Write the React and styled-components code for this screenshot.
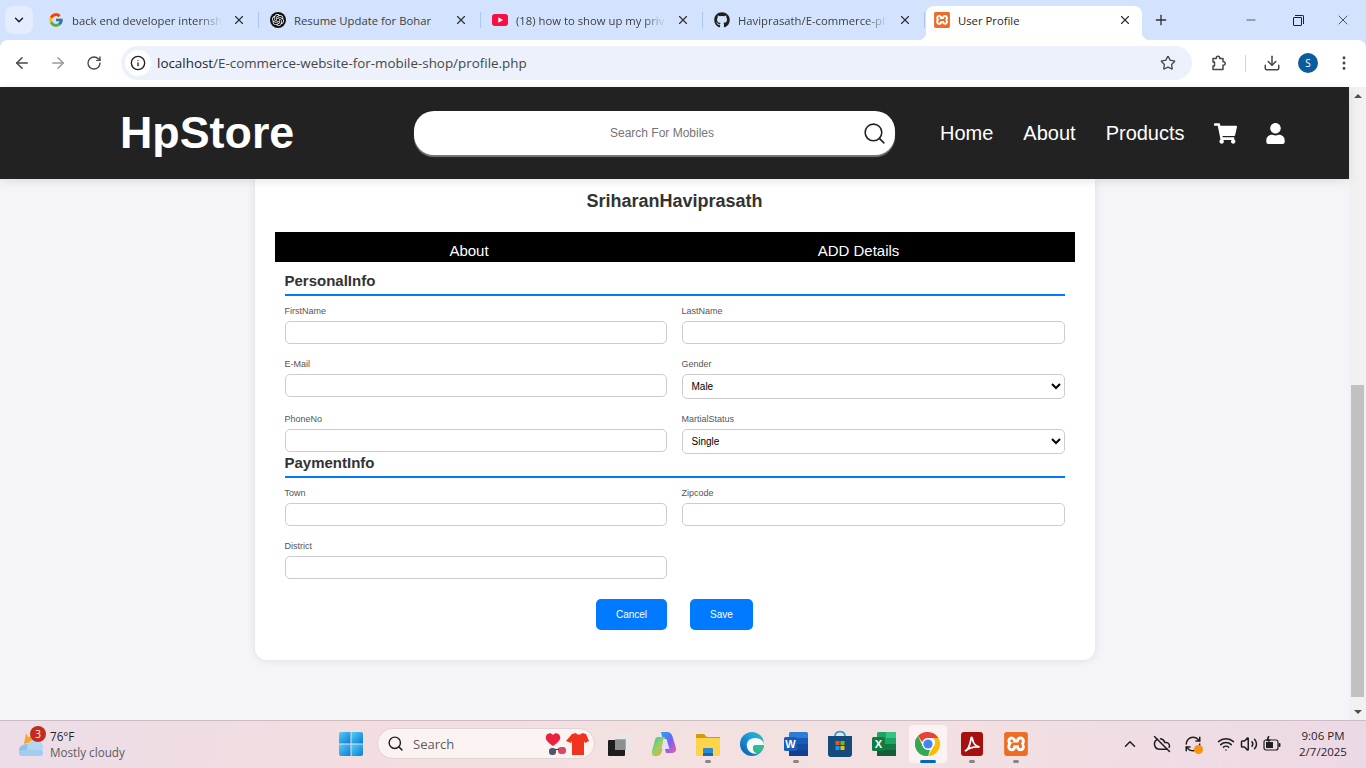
import React from 'react';
import styled, { createGlobalStyle } from 'styled-components';
import {
  ArrowLeft, ArrowRight, RotateCw, Star, Download, EllipsisVertical, Info, X, Plus, Minus,
  ChevronDown, ChevronUp, CloudOff, RefreshCw, Wifi, Volume2, Search,
} from 'lucide-react';
import { FaShoppingCart, FaUser, FaGithub } from 'react-icons/fa';
import { FcGoogle } from 'react-icons/fc';
import { SiOpenai, SiXampp } from 'react-icons/si';

const GlobalStyle = createGlobalStyle`
    html, body {
        margin: 0;
        padding: 0;
        height: 768px;
        overflow: hidden;
    }
    * {
        box-sizing: border-box;
    }
`

const Screen = styled.div`
    width: 1366px;
    height: 768px;
    display: flex;
    flex-direction: column;
    overflow: hidden;
    font-family: "Liberation Sans", Arial, sans-serif;
    background-color: #f4f4f9;
`

/* browser chrome */
const TabStrip = styled.div`
    height: 40px;
    flex: none;
    display: flex;
    align-items: flex-end;
    background-color: #d3e3fd;
    padding-left: 5px;
    font-family: "Open Sans", "Noto Sans", sans-serif;
    font-size: 11.3px;
    color: #3c4043;
`

const TabSearch = styled.div`
    width: 28px;
    height: 28px;
    margin: 0 5px 6px 0;
    border-radius: 8px;
    background-color: #e4edfd;
    display: flex;
    align-items: center;
    justify-content: center;
    color: #1f1f1f;
`

const Tab = styled.div`
    position: relative;
    width: ${props => props.$active ? "216px" : "222px"};
    height: 34px;
    flex: none;
    display: flex;
    align-items: center;
    padding: 0 0 6px ${props => props.$active ? "8px" : "10px"};
    border-radius: 8px 8px 0 0;
    background-color: ${props => props.$active ? "white" : "transparent"};
    color: ${props => props.$active ? "#1f1f1f" : "#3c4043"};

    &::before, &::after {
        content: ${props => props.$active ? '""' : "none"};
        position: absolute;
        bottom: 0;
        width: 8px;
        height: 8px;
    }
    &::before {
        left: -8px;
        background: radial-gradient(circle at 0 0, transparent 8px, white 8.5px);
    }
    &::after {
        right: -8px;
        background: radial-gradient(circle at 100% 0, transparent 8px, white 8.5px);
    }
`

const TabIconBox = styled.span`
    width: 16px;
    height: 16px;
    flex: none;
    margin-right: 8px;
    display: flex;
    align-items: center;
    justify-content: center;
`

const TabTitle = styled.span`
    width: 150px;
    flex: none;
    white-space: nowrap;
    -webkit-mask-image: ${props => props.$fade ? "linear-gradient(90deg, black 85%, transparent)" : "none"};
    mask-image: ${props => props.$fade ? "linear-gradient(90deg, black 85%, transparent)" : "none"};
`

const TabClose = styled.span`
    width: 16px;
    height: 16px;
    margin-left: 9px;
    display: flex;
    align-items: center;
    justify-content: center;
    color: #303134;
`

const TabSeparator = styled.span`
    position: absolute;
    right: 1px;
    top: 6px;
    width: 1.5px;
    height: 16px;
    background-color: #a8c7fa;
`

const NewTab = styled.div`
    width: 28px;
    height: 28px;
    margin: 0 0 6px 5px;
    display: flex;
    align-items: center;
    justify-content: center;
    color: #303134;
`

const WindowControls = styled.div`
    margin-left: auto;
    height: 40px;
    display: flex;
    color: #1f1f1f;
`

const WindowButton = styled.div`
    width: 46px;
    display: flex;
    align-items: center;
    justify-content: center;
`

const RestoreIcon = styled.span`
    position: relative;
    width: 9px;
    height: 9px;
    margin-top: 2px;
    border: 1px solid #1f1f1f;
    border-radius: 1px;

    &::after {
        content: "";
        position: absolute;
        top: -3px;
        right: -3px;
        width: 8px;
        height: 8px;
        border-top: 1px solid #1f1f1f;
        border-right: 1px solid #1f1f1f;
        border-top-right-radius: 2px;
    }
`

const ToolbarBackdrop = styled.div`
    flex: none;
    background-color: #d3e3fd;
`

const Toolbar = styled.div`
    height: 47px;
    display: flex;
    align-items: center;
    padding: 0 0 1px 4px;
    background-color: white;
    border-radius: 8px 8px 0 0;
    color: #474747;
`

const ToolButton = styled.div`
    width: 36px;
    height: 34px;
    flex: none;
    display: flex;
    align-items: center;
    justify-content: center;
    color: ${props => props.$dim ? "#9a9a9a" : "#474747"};
`

const Omnibox = styled.div`
    width: 1071px;
    height: 34px;
    margin: 0 9px 0 9px;
    flex: none;
    display: flex;
    align-items: center;
    padding: 0 10px 0 4px;
    border-radius: 17px;
    background-color: #ecf1fb;
    font-family: "Open Sans", "Noto Sans", sans-serif;
    font-size: 13.4px;
    color: #474747;
`

const SiteInfo = styled.div`
    width: 26px;
    height: 26px;
    border-radius: 50%;
    background-color: white;
    display: flex;
    align-items: center;
    justify-content: center;
    color: #1f1f1f;
    margin-right: 6px;
`

const UrlHost = styled.span`
    color: #1f1f1f;
`

const UrlText = styled.div`
    flex: 1;
`

const StarBox = styled.div`
    width: 28px;
    display: flex;
    justify-content: center;
    color: #474747;
`

const ToolDivider = styled.div`
    width: 1px;
    height: 17px;
    margin: 0 8px;
    background-color: #c7d7f0;
`

const Avatar = styled.div`
    width: 20px;
    height: 20px;
    border-radius: 50%;
    background-color: #0b5c9e;
    color: white;
    font-family: "Open Sans", sans-serif;
    font-size: 10px;
    display: flex;
    align-items: center;
    justify-content: center;
`

/* page */
const Viewport = styled.div`
    flex: 1;
    min-height: 0;
    display: flex;
`

const Page = styled.div`
    flex: 1;
    min-width: 0;
    display: flex;
    flex-direction: column;
    background-color: #f4f4f9;
`

const Header = styled.header`
    position: relative;
    z-index: 2;
    height: 92px;
    flex: none;
    display: flex;
    align-items: center;
    padding-left: 120px;
    background-color: #222;
    color: white;
    box-shadow: 0 2px 10px rgba(0, 0, 0, 0.1);
`

const Logo = styled.div`
    width: 174px;
    margin-top: -2px;
    font-size: 44.8px;
    font-weight: bold;
    white-space: nowrap;
`

const SearchBar = styled.div`
    width: 481px;
    height: 44px;
    margin: 0 45px 0 120px;
    display: flex;
    align-items: center;
    padding-right: 8px;
    border-radius: 20px;
    background-color: white;
    box-shadow: 0 2px 1px rgba(255, 255, 255, 0.4);
    color: #222;
`

const SearchInput = styled.input`
    flex: 1;
    min-width: 0;
    height: 100%;
    border: none;
    outline: none;
    background: transparent;
    padding: 0 0 0 48px;
    text-align: center;
    font-family: "Liberation Sans", Arial, sans-serif;
    font-size: 12px;

    &::placeholder {
        color: #757575;
    }
`

const Nav = styled.nav`
    display: flex;
    align-items: center;
    gap: 30px;
    font-size: 20px;
`

const CartIcon = styled(FaShoppingCart)`
    margin-left: -1px;
`

const UserIcon = styled(FaUser)`
    margin-left: -2px;
`

const Main = styled.main`
    flex: 1;
    min-height: 0;
    display: flex;
    justify-content: center;
    align-items: flex-start;
`

const Card = styled.section`
    width: 840px;
    padding: 12px 20px 30px;
    border-radius: 0 0 12px 12px;
    background-color: white;
    box-shadow: 0 0 10px rgba(0, 0, 0, 0.1);
`

const ProfileName = styled.h2`
    margin: 0 0 20px;
    font-size: 18px;
    line-height: 21px;
    font-weight: bold;
    text-align: center;
    color: #333;
`

const TabBar = styled.div`
    height: 30px;
    display: grid;
    grid-template-columns: 389px 390px;
    background-color: black;
    color: white;
    font-size: 15px;
    line-height: 18px;
    text-align: center;
    padding-top: 10px;
`

const Form = styled.form`
    padding: 10px 10px 0;
`

const SectionTitle = styled.h3`
    margin: 0 0 10px;
    padding-bottom: 4px;
    border-bottom: 2px solid #007bff;
    font-size: 15px;
    line-height: 18px;
    font-weight: bold;
    color: #333;
`

const FieldGrid = styled.div`
    display: grid;
    grid-template-columns: 382px 383px;
    column-gap: 15px;
`

const Field = styled.div`
    margin-bottom: ${props => props.$last ? "0" : "15px"};
`

const Label = styled.label`
    display: block;
    height: 15px;
    font-size: 9px;
    line-height: 11px;
    color: #555;
`

const TextInput = styled.input`
    display: block;
    width: 100%;
    height: 23px;
    border: 1px solid #ccc;
    border-radius: 5px;
    outline: none;
    background-color: white;
`

const SelectInput = styled.select`
    display: block;
    width: 100%;
    height: 25px;
    padding: 0 5px;
    border: 1px solid #ccc;
    border-radius: 5px;
    outline: none;
    background-color: white;
    font-family: "Liberation Sans", Arial, sans-serif;
    font-size: 10px;
    color: black;
`

const ButtonRow = styled.div`
    display: flex;
    justify-content: center;
    gap: 23px;
    margin-top: 5px;
`

const ActionButton = styled.button`
    width: ${props => props.$wide ? "71px" : "63px"};
    height: 31px;
    border: none;
    border-radius: 5px;
    background-color: #007bff;
    color: white;
    font-family: "Liberation Sans", Arial, sans-serif;
    font-size: 10px;
`

const ScrollTrack = styled.div`
    width: 17px;
    flex: none;
    display: flex;
    flex-direction: column;
    align-items: center;
    background-color: #f1f1f1;
`

const ScrollArrow = styled.div`
    height: 17px;
    flex: none;
    display: flex;
    align-items: center;
    justify-content: center;
    margin-top: ${props => props.$down ? "auto" : "0"};

    &::before {
        content: "";
        border-left: 4px solid transparent;
        border-right: 4px solid transparent;
        border-bottom: ${props => props.$down ? "0" : "4px solid #505050"};
        border-top: ${props => props.$down ? "4px solid #505050" : "0"};
    }
`

const ScrollThumb = styled.div`
    width: 13px;
    height: 312px;
    margin-top: 281px;
    flex: none;
    background-color: #c1c1c1;
`

/* taskbar */
const Taskbar = styled.footer`
    height: 48px;
    flex: none;
    display: flex;
    align-items: center;
    padding-bottom: 2px;
    border-top: 1px solid #cdbcc3;
    background: linear-gradient(90deg, #ecdde8 0%, #f3dde0 25%, #f3e1e1 50%, #f2dfe3 75%, #ecd9e6 100%);
    font-family: "Open Sans", "Noto Sans", sans-serif;
    color: #1f1f1f;
`

const Weather = styled.div`
    position: relative;
    width: 329px;
    height: 100%;
    flex: none;
    display: flex;
    align-items: center;
    padding-left: 18px;
`

const Badge = styled.span`
    position: absolute;
    left: 30px;
    top: 5px;
    width: 16px;
    height: 16px;
    border-radius: 50%;
    background-color: #c42b1c;
    color: white;
    font-size: 10px;
    line-height: 16px;
    text-align: center;
`

const WeatherText = styled.div`
    margin-left: 6px;
    font-size: 11.7px;
    line-height: 16px;
`

const Muted = styled.div`
    color: #5c5c5c;
`

const TaskButton = styled.div`
    position: relative;
    width: 44px;
    height: 38px;
    flex: none;
    display: flex;
    align-items: center;
    justify-content: center;

    &::before {
        content: ${props => props.$active ? '""' : "none"};
        position: absolute;
        left: 3px;
        right: 3px;
        top: 0;
        bottom: 0;
        border-radius: 4px;
        background-color: rgba(255, 255, 255, 0.6);
    }
    & > svg {
        position: relative;
    }
`

const RunDot = styled.span`
    position: absolute;
    left: 50%;
    bottom: 0;
    transform: translateX(-50%);
    width: ${props => props.$active ? "16px" : "6px"};
    height: 3px;
    border-radius: 2px;
    background-color: ${props => props.$active ? "#0067c0" : "#8a8387"};
`

const TaskSearch = styled.div`
    width: 218px;
    height: 31px;
    flex: none;
    margin: 0 3px 0 4px;
    display: flex;
    align-items: center;
    padding: 0 5px 0 9px;
    border-radius: 16px;
    border: 1px solid #e0d3d5;
    background-color: #fbf3f2;
    font-size: 13px;
    color: #5c5c5c;
`

const SearchWord = styled.span`
    margin-left: 9px;
    flex: 1;
`

const Tray = styled.div`
    margin-left: auto;
    display: flex;
    align-items: center;
    height: 100%;
    color: #1f1f1f;
`

const TrayIcon = styled.div`
    width: 18px;
    margin-left: ${props => props.$gap || 0}px;
    position: relative;
    display: flex;
    justify-content: center;
`

const OrangeDot = styled.span`
    position: absolute;
    right: -1px;
    bottom: -1px;
    width: 9px;
    height: 9px;
    border-radius: 50%;
    background-color: #f7930e;
`

const Clock = styled.div`
    width: 70px;
    margin: 0 8px 0 7px;
    font-size: 11.5px;
    line-height: 16px;
    text-align: center;
`

/* the xampp glyph is a tile with the loops cut out, so it sits on white */
const LogoTile = styled.span`
    width: ${props => props.$size}px;
    height: ${props => props.$size}px;
    flex: none;
    display: flex;
    border-radius: 2px;
    background-color: white;
    color: #ee6c23;
`

const OpenaiDisc = styled.span`
    width: 16px;
    height: 16px;
    border-radius: 50%;
    display: flex;
    align-items: center;
    justify-content: center;
    background-color: #111;
    color: white;
`

/* small logo drawings */
const YoutubeIcon = () => (
  <svg width="16" height="16" viewBox="0 0 16 16">
    <rect y="2" width="16" height="12" rx="3" fill="#f50f45" />
    <path d="M6.3 5.3v5.4L11 8z" fill="white" />
  </svg>
);

const ExtensionIcon = () => (
  <svg width="18" height="18" viewBox="0 0 18 18" fill="none" stroke="currentColor" strokeWidth="1.5" strokeLinejoin="round">
    <path d="M3 4.500h3.300a2 2 0 0 1 .2-1.500c.7-.9 2.300-.9 3 0a2 2 0 0 1 .2 1.500H13v3.200a2 2 0 0 1 1.500.2c.9.7.9 2.300 0 3a2 2 0 0 1-1.500.2V15.500H3v-3.500h1.500v-4H3z" />
  </svg>
);

const BatteryIcon = () => (
  <svg width="18" height="18" viewBox="0 0 18 18">
    <rect x="1" y="5" width="14" height="10" rx="2" fill="none" stroke="currentColor" strokeWidth="1.200" />
    <rect x="3" y="7" width="7" height="6" fill="currentColor" />
    <rect x="15.500" y="8" width="2" height="4" rx="1" fill="currentColor" />
    <path d="M5 1L3 6h2.500L4.500 9 8 4.500H5.500L6.500 1z" fill="currentColor" />
  </svg>
);

const WindowsLogo = () => (
  <svg width="24" height="24" viewBox="0 0 24 24">
    <defs>
      <linearGradient id="winA" x1="0" y1="0" x2="1" y2="1">
        <stop offset="0" stopColor="#52cdf6" />
        <stop offset="1" stopColor="#0b7cd6" />
      </linearGradient>
    </defs>
    <path d="M0 2a2 2 0 0 1 2-2h9.500v11.500H0z" fill="url(#winA)" />
    <path d="M12.500 0H22a2 2 0 0 1 2 2v9.500H12.500z" fill="url(#winA)" />
    <path d="M0 12.500h11.500V24H2a2 2 0 0 1-2-2z" fill="url(#winA)" />
    <path d="M12.500 12.500H24V22a2 2 0 0 1-2 2h-9.500z" fill="url(#winA)" />
  </svg>
);

const WeatherIcon = () => (
  <svg width="26" height="28" viewBox="0 0 26 28">
    <path d="M8 3l2 4 5-1-1 6-8 2z" fill="#f5a623" />
    <ellipse cx="9" cy="20" rx="8" ry="6" fill="#8fc0ec" />
    <ellipse cx="17" cy="17" rx="8" ry="7.500" fill="#b3d6f5" />
    <rect x="1" y="20" width="24" height="6" rx="3" fill="#a3ccf0" />
  </svg>
);

const DealsIcon = () => (
  <svg width="44" height="24" viewBox="0 0 44 24">
    <path d="M8 14C2 10 0 7 1 4c1-3 5-4 7-1 2-3 6-2 7 1 1 3-1 6-7 10z" fill="#e9233f" />
    <rect x="4" y="16" width="7" height="7" rx="3" fill="#4d5566" />
    <rect x="13" y="15" width="8" height="7" rx="3" fill="#d84a5f" />
    <path d="M10 18l4-1" stroke="#333" strokeWidth="1.200" />
    <path d="M27 2l4-1c1 2 5 2 6 0l4 1 3 7-4 2-1-2v14H27V9l-1 2-5-2z" fill="#f0331f" />
  </svg>
);

const TaskViewIcon = () => (
  <svg width="24" height="24" viewBox="0 0 24 24">
    <rect x="7" y="1" width="17" height="17" rx="1" fill="#e8e8e8" />
    <rect x="7" y="7" width="11" height="11" fill="#a9a9a9" />
    <rect y="8" width="17" height="16" rx="1" fill="#1d1d1d" />
    <rect x="7" y="8" width="10" height="10" fill="#8f8f8f" />
  </svg>
);

const CopilotIcon = () => (
  <svg width="24" height="24" viewBox="0 0 24 24">
    <defs>
      <linearGradient id="copA" x1="0" y1="0" x2="1" y2="1">
        <stop offset="0" stopColor="#1fa9f0" />
        <stop offset="0.55" stopColor="#7a5ff0" />
        <stop offset="1" stopColor="#f2609f" />
      </linearGradient>
      <linearGradient id="copB" x1="0" y1="0" x2="1" y2="1">
        <stop offset="0" stopColor="#2cc4b4" />
        <stop offset="0.5" stopColor="#9fd05a" />
        <stop offset="1" stopColor="#f5a13a" />
      </linearGradient>
    </defs>
    <path d="M9 0h6c3 0 4.500 1.500 5.500 4.500L24 16c.8 3-1 5-4 5h-6z" fill="url(#copA)" />
    <path d="M6 5h7l-3 14c-.7 3-2.500 5-5.500 5H3c-2.500 0-3.500-2-3-5L3 8c.4-2 1.500-3 3-3z" fill="url(#copB)" />
    <path d="M11.500 7h3l3 10h-8z" fill="#e6defc" />
  </svg>
);

const ExplorerIcon = () => (
  <svg width="24" height="24" viewBox="0 0 24 24">
    <path d="M0 3a1 1 0 0 1 1-1h7l3 3h13v4H0z" fill="#d39a0e" />
    <rect y="6" width="24" height="18" rx="1" fill="#fcd349" />
    <rect x="7" y="16" width="10" height="5" rx="1" fill="#2a8ad4" />
    <rect x="7" y="21" width="10" height="3" fill="#1668b0" />
  </svg>
);

const EdgeIcon = () => (
  <svg width="24" height="26" viewBox="0 0 24 26">
    <defs>
      <linearGradient id="edgeA" x1="0" y1="1" x2="1" y2="0">
        <stop offset="0" stopColor="#0c59a4" />
        <stop offset="0.6" stopColor="#1b9de2" />
        <stop offset="1" stopColor="#35c1a0" />
      </linearGradient>
    </defs>
    <circle cx="12" cy="13" r="12" fill="url(#edgeA)" />
    <path d="M24 14c0-4-4-7-9-7-6 0-9 4-8 9 1 5 6 8 11 6-3 0-5-2-5-5 0-2 1-3 3-3h8z" fill="white" opacity="0.95" />
    <path d="M24 14h-8c-2 0-3 1-3 3 0 3 2 5 5 5 3-1 6-4 6-8z" fill="#37c481" opacity="0.8" />
  </svg>
);

const WordIcon = () => (
  <svg width="24" height="24" viewBox="0 0 24 24">
    <rect x="5" width="19" height="24" rx="1.500" fill="#2b7cd3" />
    <rect x="5" y="6" width="19" height="6" fill="#185abd" />
    <rect x="5" y="12" width="19" height="6" fill="#124da3" />
    <rect x="5" y="18" width="19" height="6" fill="#103f91" />
    <rect y="5" width="13" height="14" rx="1.500" fill="#1a5cb8" />
    <text x="6.500" y="16" fontFamily="Liberation Sans, sans-serif" fontSize="11" fontWeight="bold" fill="white" textAnchor="middle">W</text>
  </svg>
);

const ExcelIcon = () => (
  <svg width="24" height="24" viewBox="0 0 24 24">
    <rect x="5" width="19" height="24" rx="1.500" fill="#21a366" />
    <rect x="14" width="10" height="6" fill="#33c481" />
    <rect x="14" y="6" width="10" height="6" fill="#21a366" />
    <rect x="5" y="12" width="9" height="6" fill="#107c41" />
    <rect x="14" y="12" width="10" height="6" fill="#107c41" />
    <rect x="5" y="18" width="19" height="6" fill="#185c37" />
    <rect y="5" width="13" height="14" rx="1.500" fill="#107c41" />
    <text x="6.500" y="16" fontFamily="Liberation Sans, sans-serif" fontSize="11" fontWeight="bold" fill="white" textAnchor="middle">X</text>
  </svg>
);

const StoreIcon = () => (
  <svg width="24" height="26" viewBox="0 0 24 26">
    <path d="M7 5c0-6 10-6 10 0" fill="none" stroke="#1b9de2" strokeWidth="1.800" />
    <path d="M0 5h24v18a3 3 0 0 1-3 3H3a3 3 0 0 1-3-3z" fill="#154a7d" />
    <rect x="7.500" y="10" width="4" height="4" fill="#f25022" />
    <rect x="12.500" y="10" width="4" height="4" fill="#7fba00" />
    <rect x="7.500" y="15" width="4" height="4" fill="#00a4ef" />
    <rect x="12.500" y="15" width="4" height="4" fill="#ffb900" />
  </svg>
);

const ChromeIcon = () => (
  <svg width="26" height="26" viewBox="0 0 26 26">
    <path d="M13 1a12 12 0 0 1 10.400 6H13a6 6 0 0 0-5.700 4.200L3 5a12 12 0 0 1 10-4z" fill="#ea4335" />
    <path d="M23.400 7A12 12 0 0 1 13 25l5.200-9a6 6 0 0 0 0-9z" fill="#fbbc05" />
    <path d="M3 5l5.200 11a6 6 0 0 0 6.800 2.700L13 25A12 12 0 0 1 3 5z" fill="#34a853" />
    <circle cx="13" cy="13" r="5.800" fill="white" />
    <circle cx="13" cy="13" r="4.600" fill="#4285f4" />
  </svg>
);

const AcrobatIcon = () => (
  <svg width="22" height="24" viewBox="0 0 22 24">
    <rect width="22" height="24" rx="3" fill="#a80f0f" />
    <path d="M4 19c3-1 5-6 6-12 0-2 1-2 1.500 0 .5 4 3 7 7 8-4-.5-9 0-14.500 4z" fill="none" stroke="white" strokeWidth="1.800" />
  </svg>
);

const tabs = [
  { title: "back end developer internsh", icon: <FcGoogle size={16} />, fade: true },
  { title: "Resume Update for Bohar", icon: <OpenaiDisc><SiOpenai size={12} /></OpenaiDisc> },
  { title: "(18) how to show up my priv", icon: <YoutubeIcon />, fade: true },
  { title: "Haviprasath/E-commerce-pl", icon: <FaGithub size={16} color="#1f1f1f" />, fade: true },
];

const dock = [
  { icon: <TaskViewIcon /> },
  { icon: <CopilotIcon /> },
  { icon: <ExplorerIcon />, dot: true },
  { icon: <EdgeIcon /> },
  { icon: <WordIcon />, dot: true },
  { icon: <StoreIcon /> },
  { icon: <ExcelIcon /> },
  { icon: <ChromeIcon />, active: true },
  { icon: <AcrobatIcon />, dot: true },
  { icon: <LogoTile $size={24}><SiXampp size={24} /></LogoTile>, dot: true },
];

function InputField({ label, last }) {
  return (
    <Field $last={last}>
      <Label>{label}</Label>
      <TextInput type="text" />
    </Field>
  );
}

function SelectField({ label, options, last }) {
  return (
    <Field $last={last}>
      <Label>{label}</Label>
      <SelectInput>
        {options.map((o) => <option key={o}>{o}</option>)}
      </SelectInput>
    </Field>
  );
}

export default function App() {
  return (
    <Screen>
      <GlobalStyle />
      <TabStrip>
        <TabSearch><ChevronDown size={14} strokeWidth={2.5} /></TabSearch>
        {tabs.map((t) => (
          <Tab key={t.title}>
            <TabIconBox>{t.icon}</TabIconBox>
            <TabTitle $fade={t.fade}>{t.title}</TabTitle>
            <TabClose><X size={14} strokeWidth={2} /></TabClose>
            <TabSeparator />
          </Tab>
        ))}
        <Tab $active>
          <TabIconBox><LogoTile $size={16}><SiXampp size={16} /></LogoTile></TabIconBox>
          <TabTitle>User Profile</TabTitle>
          <TabClose><X size={14} strokeWidth={2} /></TabClose>
        </Tab>
        <NewTab><Plus size={16} strokeWidth={2} /></NewTab>
        <WindowControls>
          <WindowButton><Minus size={14} strokeWidth={1.2} /></WindowButton>
          <WindowButton><RestoreIcon /></WindowButton>
          <WindowButton><X size={16} strokeWidth={1.1} /></WindowButton>
        </WindowControls>
      </TabStrip>

      <ToolbarBackdrop>
        <Toolbar>
          <ToolButton><ArrowLeft size={18} /></ToolButton>
          <ToolButton $dim><ArrowRight size={18} /></ToolButton>
          <ToolButton><RotateCw size={16} /></ToolButton>
          <Omnibox>
            <SiteInfo><Info size={16} /></SiteInfo>
            <UrlText><UrlHost>localhost</UrlHost>/E-commerce-website-for-mobile-shop/profile.php</UrlText>
            <StarBox><Star size={16} /></StarBox>
          </Omnibox>
          <ToolButton><ExtensionIcon /></ToolButton>
          <ToolDivider />
          <ToolButton><Download size={18} /></ToolButton>
          <ToolButton><Avatar>S</Avatar></ToolButton>
          <ToolButton><EllipsisVertical size={18} /></ToolButton>
        </Toolbar>
      </ToolbarBackdrop>

      <Viewport>
        <Page>
          <Header>
            <Logo>HpStore</Logo>
            <SearchBar>
              <SearchInput placeholder="Search For Mobiles" />
              <Search size={25} strokeWidth={1.5} />
            </SearchBar>
            <Nav>
              <span>Home</span>
              <span>About</span>
              <span>Products</span>
              <CartIcon size={23} />
              <UserIcon size={21} />
            </Nav>
          </Header>
          <Main>
            <Card>
              <ProfileName>SriharanHaviprasath</ProfileName>
              <TabBar>
                <span>About</span>
                <span>ADD Details</span>
              </TabBar>
              <Form>
                <SectionTitle>PersonalInfo</SectionTitle>
                <FieldGrid>
                  <InputField label="FirstName" />
                  <InputField label="LastName" />
                  <InputField label="E-Mail" />
                  <SelectField label="Gender" options={["Male", "Female"]} />
                  <InputField label="PhoneNo" last />
                  <SelectField label="MartialStatus" options={["Single", "Married"]} last />
                </FieldGrid>
                <SectionTitle>PaymentInfo</SectionTitle>
                <FieldGrid>
                  <InputField label="Town" />
                  <InputField label="Zipcode" />
                  <InputField label="District" />
                </FieldGrid>
                <ButtonRow>
                  <ActionButton type="button" $wide>Cancel</ActionButton>
                  <ActionButton type="button">Save</ActionButton>
                </ButtonRow>
              </Form>
            </Card>
          </Main>
        </Page>
        <ScrollTrack>
          <ScrollArrow />
          <ScrollThumb />
          <ScrollArrow $down />
        </ScrollTrack>
      </Viewport>

      <Taskbar>
        <Weather>
          <WeatherIcon />
          <Badge>3</Badge>
          <WeatherText>
            <div>76°F</div>
            <Muted>Mostly cloudy</Muted>
          </WeatherText>
        </Weather>
        <TaskButton><WindowsLogo /></TaskButton>
        <TaskSearch>
          <Search size={17} color="#1f1f1f" />
          <SearchWord>Search</SearchWord>
          <DealsIcon />
        </TaskSearch>
        {dock.map((d, i) => (
          <TaskButton key={i} $active={d.active}>
            {d.icon}
            {(d.dot || d.active) && <RunDot $active={d.active} />}
          </TaskButton>
        ))}
        <Tray>
          <TrayIcon><ChevronUp size={18} /></TrayIcon>
          <TrayIcon $gap={14}><CloudOff size={18} /></TrayIcon>
          <TrayIcon $gap={13}><RefreshCw size={18} /><OrangeDot /></TrayIcon>
          <TrayIcon $gap={15}><Wifi size={18} /></TrayIcon>
          <TrayIcon $gap={5}><Volume2 size={18} /></TrayIcon>
          <TrayIcon $gap={5}><BatteryIcon /></TrayIcon>
          <Clock>
            <div>9:06 PM</div>
            <div>2/7/2025</div>
          </Clock>
        </Tray>
      </Taskbar>
    </Screen>
  );
}
